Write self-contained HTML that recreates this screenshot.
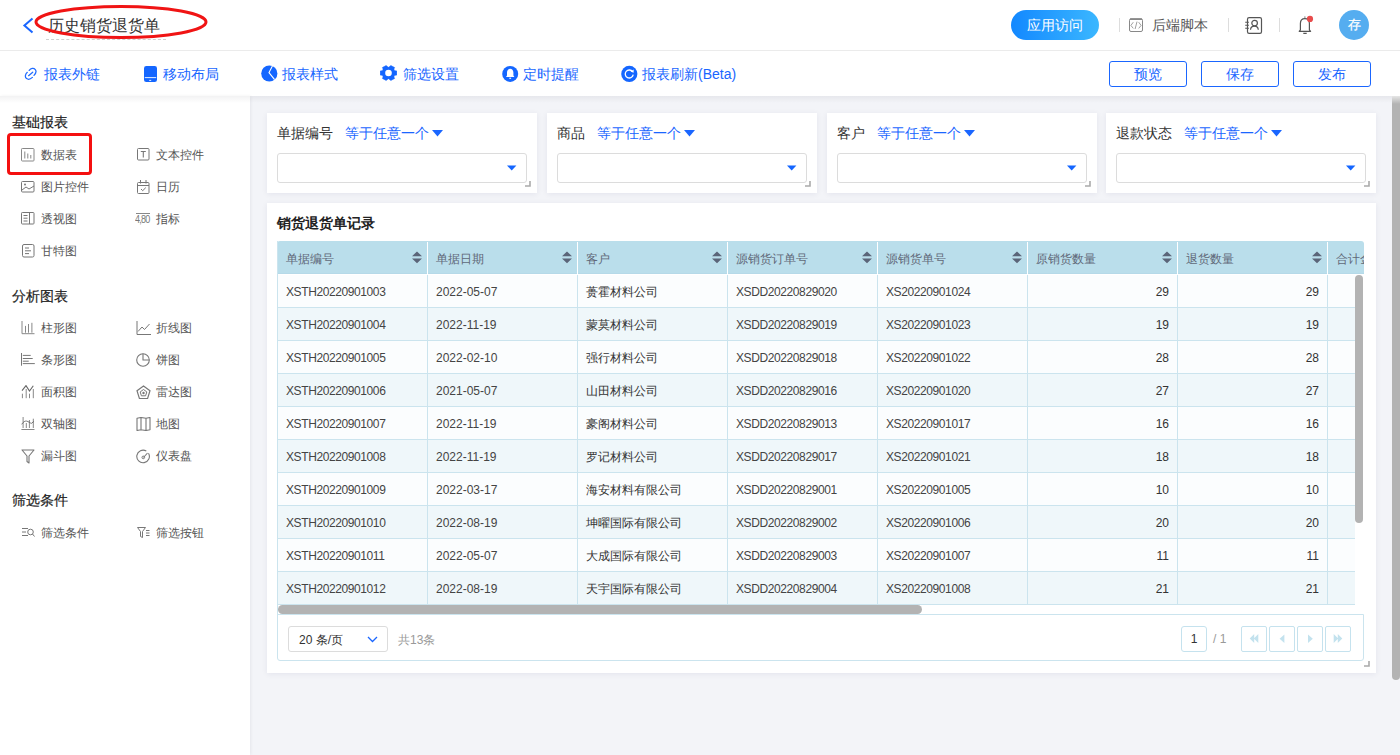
<!DOCTYPE html>
<html><head><meta charset="utf-8">
<style>
*{box-sizing:border-box;margin:0;padding:0}
html,body{width:1400px;height:755px;overflow:hidden;background:#f3f4f8;font-family:"Liberation Sans",sans-serif;color:#333}
.abs{position:absolute}
#top{position:absolute;left:0;top:0;width:1400px;height:51px;background:#fff;border-bottom:1px solid #ebebeb}
#tool{position:absolute;left:0;top:51px;width:1400px;height:45px;background:#fff}
#shadow{position:absolute;left:0;top:96px;width:1392px;z-index:5;height:7px;background:linear-gradient(rgba(0,0,20,0.05),rgba(0,0,20,0))}
#side{position:absolute;left:0;top:96px;width:250px;height:659px;background:#fff;box-shadow:1px 0 3px rgba(0,0,40,0.06)}
.t14{font-size:14px;line-height:14px;white-space:nowrap}
.t12{font-size:12px;line-height:12px;white-space:nowrap}
.blue{color:#1866ff}
.btn{position:absolute;top:61px;width:78px;height:26px;border:1px solid #1a66ff;border-radius:3px;color:#1a66ff;font-size:14px;line-height:24px;text-align:center;background:#fff}
.sd{font-size:12px;line-height:12px;color:#555;white-space:nowrap}
.th{font-size:12px;line-height:12px;color:#606878;white-space:nowrap}
.td{font-size:12px;line-height:12px;color:#444;white-space:nowrap;letter-spacing:-0.4px}
.tdc{letter-spacing:0;color:#333}
.tdd{letter-spacing:0px}
.card{position:absolute;background:#fff;box-shadow:0 1px 6px rgba(20,20,80,0.07)}
</style></head><body>
<div id="top"></div>
<div id="tool"></div>
<div id="side"></div>
<div id="shadow"></div>
<!--TOPSTART-->
<!-- TOP BAR -->
<svg class="abs" style="left:22px;top:17px" width="13" height="17" viewBox="0 0 13 17"><path d="M10.5 1.5 L2.4 8.5 L10.5 15.5" fill="none" stroke="#1a66ff" stroke-width="2"/></svg>
<div class="abs t14" style="left:48px;top:18px;font-size:16px;line-height:16px;color:#333">历史销货退货单</div>
<div class="abs" style="left:46px;top:39px;width:120px;border-top:1px dashed #d0d0d0"></div>
<svg class="abs" style="left:31px;top:2px" width="180" height="40" viewBox="0 0 180 40"><ellipse cx="90" cy="20" rx="85" ry="15.5" fill="none" stroke="#f01414" stroke-width="3"/></svg>

<div class="abs" style="left:1011px;top:10px;width:88px;height:30px;border-radius:15px;background:linear-gradient(90deg,#1388ff,#3bb7ff);color:#fff;font-size:14px;line-height:30px;text-align:center">应用访问</div>
<div class="abs" style="left:1119px;top:18px;width:1px;height:14px;background:#ddd"></div>
<svg class="abs" style="left:1129px;top:18px" width="14" height="14" viewBox="0 0 14 14"><rect x="0.5" y="0.8" width="13" height="12.7" rx="1.5" fill="none" stroke="#888" stroke-width="1"/><path d="M1 1.2h12" stroke="#888" stroke-width="1.6"/><path d="M4.3 4.2 L1.9 7.4 L4.3 10.4 M9.7 4.2 L12.1 7.4 L9.7 10.4 M8 3.6 L6.1 11" fill="none" stroke="#888" stroke-width="0.8"/></svg>
<div class="abs t14" style="left:1152px;top:18px;color:#555">后端脚本</div>
<div class="abs" style="left:1228px;top:18px;width:1px;height:14px;background:#ddd"></div>
<svg class="abs" style="left:1244px;top:16px" width="20" height="19" viewBox="0 0 20 19"><rect x="3.5" y="1.6" width="14" height="15.8" rx="1.6" fill="none" stroke="#555" stroke-width="1.2"/><path d="M1.2 6.3h3.7 M1.2 9.3h3.7 M1.2 12.3h3.7" stroke="#555" stroke-width="1.1"/><circle cx="10.6" cy="7.1" r="2.8" fill="none" stroke="#555" stroke-width="1.2"/><path d="M6.5 13.8 C6.9 9 13.9 9 14.3 13.8" fill="none" stroke="#555" stroke-width="1.2"/></svg>
<div class="abs" style="left:1279px;top:18px;width:1px;height:14px;background:#ddd"></div>
<svg class="abs" style="left:1296px;top:15px" width="20" height="20" viewBox="0 0 20 20"><path d="M3.2 16.3 L4.4 14.8 V8.6 C4.4 5.5 6.2 3.7 8.9 3.7 C11.6 3.7 13.4 5.5 13.4 8.6 V14.8 L14.6 16.3 Z" fill="none" stroke="#555" stroke-width="1.2" stroke-linejoin="round"/><path d="M8.4 2.2 H9.4 M7.3 18.4 H10.7" stroke="#555" stroke-width="1.2"/><circle cx="14" cy="3.9" r="3.1" fill="#e84c4c"/></svg>
<div class="abs" style="left:1339px;top:10px;width:30px;height:30px;border-radius:50%;background:#55adf0;color:#fff;font-size:12.5px;line-height:31px;text-align:center;-webkit-text-stroke:0.2px #fff">存</div>

<!-- TOOLBAR -->
<svg class="abs" style="left:24px;top:67px" width="14" height="14" viewBox="0 0 14 14"><path d="M5.2 3.4 C6.8 1.3 9.6 0.6 11.3 2.6 C12.6 4.3 11.7 6.7 10 8.4 M3.3 5.3 C1.2 7 0.6 10.2 2.6 11.6 C4.3 12.8 6.7 12 8.4 10.4 M4.6 8.7 L8.7 5.2" fill="none" stroke="#1f6bff" stroke-width="1.25" stroke-linecap="round"/></svg>
<div class="abs t14 blue" style="left:44px;top:67px">报表外链</div>
<svg class="abs" style="left:144px;top:66px" width="13" height="16" viewBox="0 0 13 16"><rect x="0" y="0" width="13" height="16" rx="2.3" fill="#1466ff"/><rect x="0.8" y="11.2" width="11.4" height="0.9" fill="#fff"/><rect x="5.2" y="13.9" width="2" height="0.9" fill="#fff"/></svg>
<div class="abs t14 blue" style="left:163px;top:67px">移动布局</div>
<svg class="abs" style="left:261px;top:65px" width="17" height="17" viewBox="0 0 17 17"><circle cx="8.3" cy="8.5" r="8.1" fill="#1466ff"/><path d="M11.8 0.3 L8 7.6 L13.6 14.6" fill="none" stroke="#fff" stroke-width="1.1"/></svg>
<div class="abs t14 blue" style="left:282px;top:67px">报表样式</div>
<svg class="abs" style="left:380px;top:65px" width="17" height="16" viewBox="0 0 17 16"><path d="M13.96 5.17 L15.27 5.78 L16.81 6.00 L16.81 10.00 L15.27 10.22 L13.96 10.83 L13.96 10.83 L14.02 12.17 L14.58 13.47 L10.73 15.48 L9.75 14.38 L8.50 13.67 L8.50 13.67 L7.25 14.38 L6.27 15.48 L2.42 13.47 L2.98 12.17 L3.04 10.84 L3.04 10.83 L1.73 10.22 L0.19 10.00 L0.19 6.00 L1.73 5.78 L3.04 5.17 L3.04 5.17 L2.98 3.83 L2.42 2.53 L6.27 0.52 L7.25 1.62 L8.50 2.33 L8.50 2.33 L9.75 1.62 L10.73 0.52 L14.58 2.53 L14.02 3.83 L13.96 5.17Z" fill="#1466ff" stroke="#1466ff" stroke-width="0.6" stroke-linejoin="round"/><circle cx="8.5" cy="8" r="3.3" fill="#fff"/></svg>
<div class="abs t14 blue" style="left:403px;top:67px">筛选设置</div>
<svg class="abs" style="left:502px;top:65px" width="17" height="17" viewBox="0 0 17 17"><circle cx="8.2" cy="8.9" r="8" fill="#1466ff"/><path d="M4 11.9 L5 10.6 V7.6 C5 5.4 6.5 3.8 8.2 3.8 C9.9 3.8 11.4 5.4 11.4 7.6 V10.6 L12.4 11.9 Z" fill="#fff"/><rect x="7.3" y="12.7" width="1.8" height="1.1" fill="#fff"/></svg>
<div class="abs t14 blue" style="left:523px;top:67px">定时提醒</div>
<svg class="abs" style="left:621px;top:65px" width="17" height="17" viewBox="0 0 17 17"><circle cx="8.3" cy="8.9" r="8.1" fill="#1466ff"/><path d="M11.6 6.8 A4 4 0 1 0 12.2 9.6" fill="none" stroke="#fff" stroke-width="1.3"/><path d="M9.6 6.6 L12.6 4.6 L12.6 7.8 Z" fill="#fff"/></svg>
<div class="abs t14 blue" style="left:642px;top:67px">报表刷新(Beta)</div>

<div class="btn" style="left:1109px">预览</div>
<div class="btn" style="left:1201px">保存</div>
<div class="btn" style="left:1293px">发布</div>

<!--TOPEND-->
<!--SIDESTART-->
<!-- SIDEBAR -->
<div class="abs t14" style="left:12px;top:115px;font-weight:500;color:#222;-webkit-text-stroke:0.2px #222">基础报表</div>
<div class="abs" style="left:7px;top:133px;width:85px;height:42px;border:3px solid #f41010;border-radius:4px"></div>
<svg class="abs" style="left:21px;top:148px" width="14" height="14" viewBox="0 0 14 14"><rect x="0.5" y="0.5" width="12.5" height="12.5" rx="0.8" fill="none" stroke="#888"/><path d="M3.8 3.5v7 M6.8 5.5v5 M9.8 7v3.5" stroke="#888" stroke-width="1"/></svg>
<div class="abs sd" style="left:41px;top:149px">数据表</div>
<svg class="abs" style="left:137px;top:148px" width="13" height="13" viewBox="0 0 13 13"><rect x="0.5" y="0.5" width="11.5" height="11.5" rx="1" fill="none" stroke="#777"/><path d="M3.8 3.5h5 M6.3 3.5v6" stroke="#777" stroke-width="1.1"/></svg>
<div class="abs sd" style="left:156px;top:149px">文本控件</div>

<svg class="abs" style="left:21px;top:181px" width="14" height="12" viewBox="0 0 14 12"><rect x="0.5" y="0.5" width="12.5" height="10.5" rx="1" fill="none" stroke="#777"/><path d="M1 9 L5 6 L8 8 L13 5" fill="none" stroke="#777"/><circle cx="4" cy="3.5" r="1" fill="#777"/></svg>
<div class="abs sd" style="left:41px;top:181px">图片控件</div>
<svg class="abs" style="left:137px;top:180px" width="13" height="14" viewBox="0 0 13 14"><rect x="0.5" y="2.5" width="11.5" height="11" rx="1" fill="none" stroke="#777"/><path d="M0.5 5.5h11.5 M3.5 0v3.5 M9 0v3.5 M4 9 L5.7 10.7 L8.8 7.6" fill="none" stroke="#777"/></svg>
<div class="abs sd" style="left:156px;top:181px">日历</div>

<svg class="abs" style="left:21px;top:212px" width="14" height="13" viewBox="0 0 14 13"><rect x="0.5" y="0.5" width="12.5" height="11.5" rx="0.8" fill="none" stroke="#777"/><path d="M2.5 3.5h4 M2.5 6.2h4 M2.5 9h4 M8.5 0.5v11.5" fill="none" stroke="#777"/></svg>
<div class="abs sd" style="left:41px;top:213px">透视图</div>
<div class="abs" style="left:136px;top:213px;width:14px;border-top:1px solid #888"></div>
<div class="abs" style="left:135px;top:215px;font-size:10px;line-height:10px;color:#777;letter-spacing:-0.8px;transform:scaleX(0.9);transform-origin:left">4,80</div>
<div class="abs sd" style="left:156px;top:213px">指标</div>

<svg class="abs" style="left:22px;top:244px" width="13" height="14" viewBox="0 0 13 14"><rect x="0.5" y="0.5" width="11.5" height="12.5" rx="1.5" fill="none" stroke="#777"/><path d="M3 4h4 M3 6.8h6 M3 9.6h4" fill="none" stroke="#777"/></svg>
<div class="abs sd" style="left:41px;top:245px">甘特图</div>

<div class="abs t14" style="left:12px;top:289px;font-weight:500;color:#222;-webkit-text-stroke:0.2px #222">分析图表</div>
<svg class="abs" style="left:20px;top:321px" width="15" height="14" viewBox="0 0 15 14"><path d="M2 0v12.7h12.5 M5.5 4.9v6.8 M8.5 3v8.7 M11.9 1.8v9.9" fill="none" stroke="#888" stroke-width="1"/></svg>
<div class="abs sd" style="left:41px;top:322px">柱形图</div>
<svg class="abs" style="left:136px;top:321px" width="15" height="14" viewBox="0 0 15 14"><path d="M1 0v13.5h14 M2 10.5 L6 6 L8.5 8.5 L13.5 3" fill="none" stroke="#777"/></svg>
<div class="abs sd" style="left:156px;top:322px">折线图</div>

<svg class="abs" style="left:20px;top:353px" width="15" height="14" viewBox="0 0 15 14"><path d="M1.5 0v12.7 M2.8 2.4h7.9 M2.8 5.5h9.9 M2.8 8.2h5.9 M2.8 10.6h12" fill="none" stroke="#777" stroke-width="1"/></svg>
<div class="abs sd" style="left:41px;top:354px">条形图</div>
<svg class="abs" style="left:136px;top:353px" width="14" height="14" viewBox="0 0 14 14"><circle cx="7" cy="7" r="6.3" fill="none" stroke="#777" stroke-width="1.1"/><path d="M7 0.7v6.3h6.3" fill="none" stroke="#777" stroke-width="1.1"/></svg>
<div class="abs sd" style="left:156px;top:354px">饼图</div>

<svg class="abs" style="left:20px;top:385px" width="15" height="15" viewBox="0 0 15 15"><path d="M2 5.7 L6 0.6 L9.5 6 L13.3 0.8" fill="none" stroke="#666" stroke-width="1.1"/><path d="M2.4 8.7v4.5 M6.2 4v9.2 M9.5 8.7v4.5 M13.3 4v9.2" fill="none" stroke="#888" stroke-width="1"/></svg>
<div class="abs sd" style="left:41px;top:386px">面积图</div>
<svg class="abs" style="left:136px;top:385px" width="15" height="15" viewBox="0 0 15 15"><path d="M7.5 1 L14 5.8 L11.6 13.5 H3.4 L1 5.8 Z" fill="none" stroke="#777" stroke-width="1.2"/><path d="M7.5 4.5 L10.8 6.9 L9.6 10.8 H5.4 L4.2 6.9 Z" fill="none" stroke="#777" stroke-width="1"/><circle cx="7.5" cy="8" r="1.2" fill="#777"/></svg>
<div class="abs sd" style="left:156px;top:386px">雷达图</div>

<svg class="abs" style="left:20px;top:417px" width="15" height="14" viewBox="0 0 15 14"><path d="M3.1 0v11 M13.3 1.7v9.3 M6.3 6v5 M9.4 3v8" fill="none" stroke="#888" stroke-width="1"/><path d="M1.4 12.5h13.1" stroke="#888" stroke-width="1"/><path d="M1.7 7.3 C3.5 4.6 5 3.9 6.5 4.1 C8.5 4.4 10 6.2 11.6 6.3 L13.9 4.3" fill="none" stroke="#666" stroke-width="0.9"/></svg>
<div class="abs sd" style="left:41px;top:418px">双轴图</div>
<svg class="abs" style="left:136px;top:417px" width="15" height="14" viewBox="0 0 15 14"><path d="M1 1.2 L5 0.5 L10 1.2 L14 0.5 V12.8 L10 13.5 L5 12.8 L1 13.5 Z M5 0.5v12.3 M10 1.2v12.3" fill="none" stroke="#777" stroke-width="1.1" stroke-linejoin="round"/></svg>
<div class="abs sd" style="left:156px;top:418px">地图</div>

<svg class="abs" style="left:21px;top:449px" width="14" height="15" viewBox="0 0 14 15"><path d="M1 1h12 L8 7 V14 L6 12.5 V7 Z" fill="none" stroke="#777" stroke-width="1.1" stroke-linejoin="round"/></svg>
<div class="abs sd" style="left:41px;top:450px">漏斗图</div>
<svg class="abs" style="left:136px;top:449px" width="15" height="15" viewBox="0 0 15 15"><path d="M12.5 4.2 A6.3 6.3 0 1 1 10.3 2" fill="none" stroke="#777" stroke-width="1.1"/><path d="M7.5 8.5 L11.5 4" fill="none" stroke="#777" stroke-width="1.1"/><circle cx="7.3" cy="8.4" r="1.3" fill="none" stroke="#777"/></svg>
<div class="abs sd" style="left:156px;top:450px">仪表盘</div>

<div class="abs t14" style="left:12px;top:493px;font-weight:500;color:#222;-webkit-text-stroke:0.2px #222">筛选条件</div>
<svg class="abs" style="left:22px;top:527px" width="13" height="11" viewBox="0 0 13 11"><path d="M0 1.5h6 M0 5h4 M0 8.5h6" fill="none" stroke="#777"/><circle cx="8.5" cy="5" r="2.8" fill="none" stroke="#777"/><path d="M10.5 7 L12.5 9.5" stroke="#777"/></svg>
<div class="abs sd" style="left:41px;top:527px">筛选条件</div>
<svg class="abs" style="left:137px;top:527px" width="13" height="11" viewBox="0 0 13 11"><path d="M0.5 0.5h8 L5.5 4.5 V10.5 L3.5 9.5 V4.5 Z" fill="none" stroke="#777" stroke-linejoin="round"/><path d="M9 3.5h3.5 M9 6h3.5 M9 8.5h3.5" stroke="#777"/></svg>
<div class="abs sd" style="left:156px;top:527px">筛选按钮</div>

<!--SIDEEND-->
<!--CARDSTART-->
<!-- FILTER CARDS -->
<div class="card" style="left:267px;top:113px;width:270px;height:80px"></div>
<div class="abs t14" style="left:277px;top:126px;color:#333">单据编号</div>
<div class="abs t14" style="left:345px;top:126px;color:#1a66ff">等于任意一个</div>
<svg class="abs" style="left:432px;top:130px" width="11" height="7" viewBox="0 0 11 7"><path d="M0 0h11L5.5 6.5Z" fill="#1a66ff"/></svg>
<div class="abs" style="left:277px;top:153px;width:250px;height:30px;border:1px solid #dcdcdc;border-radius:3px;background:#fff"></div>
<svg class="abs" style="left:507px;top:165px" width="10" height="6" viewBox="0 0 10 6"><path d="M0 0.5h9.4L4.7 5.5Z" fill="#1466ff"/></svg>
<svg class="abs" style="left:525px;top:181px" width="7" height="7" viewBox="0 0 7 7"><path d="M5 0v5H0" fill="none" stroke="#aaa" stroke-width="1.6"/></svg>
<div class="card" style="left:547px;top:113px;width:270px;height:80px"></div>
<div class="abs t14" style="left:557px;top:126px;color:#333">商品</div>
<div class="abs t14" style="left:597px;top:126px;color:#1a66ff">等于任意一个</div>
<svg class="abs" style="left:684px;top:130px" width="11" height="7" viewBox="0 0 11 7"><path d="M0 0h11L5.5 6.5Z" fill="#1a66ff"/></svg>
<div class="abs" style="left:557px;top:153px;width:250px;height:30px;border:1px solid #dcdcdc;border-radius:3px;background:#fff"></div>
<svg class="abs" style="left:787px;top:165px" width="10" height="6" viewBox="0 0 10 6"><path d="M0 0.5h9.4L4.7 5.5Z" fill="#1466ff"/></svg>
<svg class="abs" style="left:805px;top:181px" width="7" height="7" viewBox="0 0 7 7"><path d="M5 0v5H0" fill="none" stroke="#aaa" stroke-width="1.6"/></svg>
<div class="card" style="left:827px;top:113px;width:270px;height:80px"></div>
<div class="abs t14" style="left:837px;top:126px;color:#333">客户</div>
<div class="abs t14" style="left:877px;top:126px;color:#1a66ff">等于任意一个</div>
<svg class="abs" style="left:964px;top:130px" width="11" height="7" viewBox="0 0 11 7"><path d="M0 0h11L5.5 6.5Z" fill="#1a66ff"/></svg>
<div class="abs" style="left:837px;top:153px;width:250px;height:30px;border:1px solid #dcdcdc;border-radius:3px;background:#fff"></div>
<svg class="abs" style="left:1067px;top:165px" width="10" height="6" viewBox="0 0 10 6"><path d="M0 0.5h9.4L4.7 5.5Z" fill="#1466ff"/></svg>
<svg class="abs" style="left:1085px;top:181px" width="7" height="7" viewBox="0 0 7 7"><path d="M5 0v5H0" fill="none" stroke="#aaa" stroke-width="1.6"/></svg>
<div class="card" style="left:1106px;top:113px;width:270px;height:80px"></div>
<div class="abs t14" style="left:1116px;top:126px;color:#333">退款状态</div>
<div class="abs t14" style="left:1184px;top:126px;color:#1a66ff">等于任意一个</div>
<svg class="abs" style="left:1271px;top:130px" width="11" height="7" viewBox="0 0 11 7"><path d="M0 0h11L5.5 6.5Z" fill="#1a66ff"/></svg>
<div class="abs" style="left:1116px;top:153px;width:250px;height:30px;border:1px solid #dcdcdc;border-radius:3px;background:#fff"></div>
<svg class="abs" style="left:1346px;top:165px" width="10" height="6" viewBox="0 0 10 6"><path d="M0 0.5h9.4L4.7 5.5Z" fill="#1466ff"/></svg>
<svg class="abs" style="left:1364px;top:181px" width="7" height="7" viewBox="0 0 7 7"><path d="M5 0v5H0" fill="none" stroke="#aaa" stroke-width="1.6"/></svg>
<!--CARDEND-->
<!--TABLESTART-->
<!-- TABLE CARD -->
<div class="card" style="left:267px;top:203px;width:1109px;height:470px"></div>
<div class="abs t14" style="left:277px;top:216px;font-weight:bold;color:#222">销货退货单记录</div>
<div class="abs" style="left:277px;top:241px;width:1087px;height:374px;overflow:hidden;background:#fff;border-radius:3px 3px 0 0">
<div class="abs" style="left:0;top:0;width:1087px;height:33px;background:#badeeb;border-bottom:1px solid #b5d9e8"></div>
<div class="abs th" style="left:9px;top:12px">单据编号</div>
<svg class="abs" style="left:135px;top:10px" width="10" height="13" viewBox="0 0 10 13"><path d="M0 5.2h10L5 0.6Z M0 7.6h10L5 12.2Z" fill="#5b6579"/></svg>
<div class="abs" style="left:150px;top:1px;width:1px;height:32px;background:#fff"></div>
<div class="abs th" style="left:159px;top:12px">单据日期</div>
<svg class="abs" style="left:285px;top:10px" width="10" height="13" viewBox="0 0 10 13"><path d="M0 5.2h10L5 0.6Z M0 7.6h10L5 12.2Z" fill="#5b6579"/></svg>
<div class="abs" style="left:300px;top:1px;width:1px;height:32px;background:#fff"></div>
<div class="abs th" style="left:309px;top:12px">客户</div>
<svg class="abs" style="left:435px;top:10px" width="10" height="13" viewBox="0 0 10 13"><path d="M0 5.2h10L5 0.6Z M0 7.6h10L5 12.2Z" fill="#5b6579"/></svg>
<div class="abs" style="left:450px;top:1px;width:1px;height:32px;background:#fff"></div>
<div class="abs th" style="left:459px;top:12px">源销货订单号</div>
<svg class="abs" style="left:585px;top:10px" width="10" height="13" viewBox="0 0 10 13"><path d="M0 5.2h10L5 0.6Z M0 7.6h10L5 12.2Z" fill="#5b6579"/></svg>
<div class="abs" style="left:600px;top:1px;width:1px;height:32px;background:#fff"></div>
<div class="abs th" style="left:609px;top:12px">源销货单号</div>
<svg class="abs" style="left:735px;top:10px" width="10" height="13" viewBox="0 0 10 13"><path d="M0 5.2h10L5 0.6Z M0 7.6h10L5 12.2Z" fill="#5b6579"/></svg>
<div class="abs" style="left:750px;top:1px;width:1px;height:32px;background:#fff"></div>
<div class="abs th" style="left:759px;top:12px">原销货数量</div>
<svg class="abs" style="left:885px;top:10px" width="10" height="13" viewBox="0 0 10 13"><path d="M0 5.2h10L5 0.6Z M0 7.6h10L5 12.2Z" fill="#5b6579"/></svg>
<div class="abs" style="left:900px;top:1px;width:1px;height:32px;background:#fff"></div>
<div class="abs th" style="left:909px;top:12px">退货数量</div>
<svg class="abs" style="left:1035px;top:10px" width="10" height="13" viewBox="0 0 10 13"><path d="M0 5.2h10L5 0.6Z M0 7.6h10L5 12.2Z" fill="#5b6579"/></svg>
<div class="abs" style="left:1050px;top:1px;width:1px;height:32px;background:#fff"></div>
<div class="abs th" style="left:1059px;top:12px">合计金额</div>
<div class="abs" style="left:0;top:34px;width:1078px;height:33px;background:#fbfdfe;border-bottom:1px solid #cbe4ee"></div>
<div class="abs td" style="left:9px;top:45px">XSTH20220901003</div>
<div class="abs td tdd" style="left:159px;top:45px">2022-05-07</div>
<div class="abs td tdc" style="left:309px;top:45px">蒉霍材料公司</div>
<div class="abs td" style="left:459px;top:45px">XSDD20220829020</div>
<div class="abs td" style="left:609px;top:45px">XS20220901024</div>
<div class="abs td tdc" style="left:750px;top:45px;width:142px;text-align:right">29</div>
<div class="abs td tdc" style="left:900px;top:45px;width:142px;text-align:right">29</div>
<div class="abs" style="left:0;top:67px;width:1078px;height:33px;background:#eff7fa;border-bottom:1px solid #cbe4ee"></div>
<div class="abs td" style="left:9px;top:78px">XSTH20220901004</div>
<div class="abs td tdd" style="left:159px;top:78px">2022-11-19</div>
<div class="abs td tdc" style="left:309px;top:78px">蒙莫材料公司</div>
<div class="abs td" style="left:459px;top:78px">XSDD20220829019</div>
<div class="abs td" style="left:609px;top:78px">XS20220901023</div>
<div class="abs td tdc" style="left:750px;top:78px;width:142px;text-align:right">19</div>
<div class="abs td tdc" style="left:900px;top:78px;width:142px;text-align:right">19</div>
<div class="abs" style="left:0;top:100px;width:1078px;height:33px;background:#fbfdfe;border-bottom:1px solid #cbe4ee"></div>
<div class="abs td" style="left:9px;top:111px">XSTH20220901005</div>
<div class="abs td tdd" style="left:159px;top:111px">2022-02-10</div>
<div class="abs td tdc" style="left:309px;top:111px">强行材料公司</div>
<div class="abs td" style="left:459px;top:111px">XSDD20220829018</div>
<div class="abs td" style="left:609px;top:111px">XS20220901022</div>
<div class="abs td tdc" style="left:750px;top:111px;width:142px;text-align:right">28</div>
<div class="abs td tdc" style="left:900px;top:111px;width:142px;text-align:right">28</div>
<div class="abs" style="left:0;top:133px;width:1078px;height:33px;background:#eff7fa;border-bottom:1px solid #cbe4ee"></div>
<div class="abs td" style="left:9px;top:144px">XSTH20220901006</div>
<div class="abs td tdd" style="left:159px;top:144px">2021-05-07</div>
<div class="abs td tdc" style="left:309px;top:144px">山田材料公司</div>
<div class="abs td" style="left:459px;top:144px">XSDD20220829016</div>
<div class="abs td" style="left:609px;top:144px">XS20220901020</div>
<div class="abs td tdc" style="left:750px;top:144px;width:142px;text-align:right">27</div>
<div class="abs td tdc" style="left:900px;top:144px;width:142px;text-align:right">27</div>
<div class="abs" style="left:0;top:166px;width:1078px;height:33px;background:#fbfdfe;border-bottom:1px solid #cbe4ee"></div>
<div class="abs td" style="left:9px;top:177px">XSTH20220901007</div>
<div class="abs td tdd" style="left:159px;top:177px">2022-11-19</div>
<div class="abs td tdc" style="left:309px;top:177px">豪阁材料公司</div>
<div class="abs td" style="left:459px;top:177px">XSDD20220829013</div>
<div class="abs td" style="left:609px;top:177px">XS20220901017</div>
<div class="abs td tdc" style="left:750px;top:177px;width:142px;text-align:right">16</div>
<div class="abs td tdc" style="left:900px;top:177px;width:142px;text-align:right">16</div>
<div class="abs" style="left:0;top:199px;width:1078px;height:33px;background:#eff7fa;border-bottom:1px solid #cbe4ee"></div>
<div class="abs td" style="left:9px;top:210px">XSTH20220901008</div>
<div class="abs td tdd" style="left:159px;top:210px">2022-11-19</div>
<div class="abs td tdc" style="left:309px;top:210px">罗记材料公司</div>
<div class="abs td" style="left:459px;top:210px">XSDD20220829017</div>
<div class="abs td" style="left:609px;top:210px">XS20220901021</div>
<div class="abs td tdc" style="left:750px;top:210px;width:142px;text-align:right">18</div>
<div class="abs td tdc" style="left:900px;top:210px;width:142px;text-align:right">18</div>
<div class="abs" style="left:0;top:232px;width:1078px;height:33px;background:#fbfdfe;border-bottom:1px solid #cbe4ee"></div>
<div class="abs td" style="left:9px;top:243px">XSTH20220901009</div>
<div class="abs td tdd" style="left:159px;top:243px">2022-03-17</div>
<div class="abs td tdc" style="left:309px;top:243px">海安材料有限公司</div>
<div class="abs td" style="left:459px;top:243px">XSDD20220829001</div>
<div class="abs td" style="left:609px;top:243px">XS20220901005</div>
<div class="abs td tdc" style="left:750px;top:243px;width:142px;text-align:right">10</div>
<div class="abs td tdc" style="left:900px;top:243px;width:142px;text-align:right">10</div>
<div class="abs" style="left:0;top:265px;width:1078px;height:33px;background:#eff7fa;border-bottom:1px solid #cbe4ee"></div>
<div class="abs td" style="left:9px;top:276px">XSTH20220901010</div>
<div class="abs td tdd" style="left:159px;top:276px">2022-08-19</div>
<div class="abs td tdc" style="left:309px;top:276px">坤曜国际有限公司</div>
<div class="abs td" style="left:459px;top:276px">XSDD20220829002</div>
<div class="abs td" style="left:609px;top:276px">XS20220901006</div>
<div class="abs td tdc" style="left:750px;top:276px;width:142px;text-align:right">20</div>
<div class="abs td tdc" style="left:900px;top:276px;width:142px;text-align:right">20</div>
<div class="abs" style="left:0;top:298px;width:1078px;height:33px;background:#fbfdfe;border-bottom:1px solid #cbe4ee"></div>
<div class="abs td" style="left:9px;top:309px">XSTH20220901011</div>
<div class="abs td tdd" style="left:159px;top:309px">2022-05-07</div>
<div class="abs td tdc" style="left:309px;top:309px">大成国际有限公司</div>
<div class="abs td" style="left:459px;top:309px">XSDD20220829003</div>
<div class="abs td" style="left:609px;top:309px">XS20220901007</div>
<div class="abs td tdc" style="left:750px;top:309px;width:142px;text-align:right">11</div>
<div class="abs td tdc" style="left:900px;top:309px;width:142px;text-align:right">11</div>
<div class="abs" style="left:0;top:331px;width:1078px;height:33px;background:#eff7fa;border-bottom:1px solid #cbe4ee"></div>
<div class="abs td" style="left:9px;top:342px">XSTH20220901012</div>
<div class="abs td tdd" style="left:159px;top:342px">2022-08-19</div>
<div class="abs td tdc" style="left:309px;top:342px">天宇国际有限公司</div>
<div class="abs td" style="left:459px;top:342px">XSDD20220829004</div>
<div class="abs td" style="left:609px;top:342px">XS20220901008</div>
<div class="abs td tdc" style="left:750px;top:342px;width:142px;text-align:right">21</div>
<div class="abs td tdc" style="left:900px;top:342px;width:142px;text-align:right">21</div>
<div class="abs" style="left:150px;top:34px;width:1px;height:330px;background:#cbe4ee"></div>
<div class="abs" style="left:300px;top:34px;width:1px;height:330px;background:#cbe4ee"></div>
<div class="abs" style="left:450px;top:34px;width:1px;height:330px;background:#cbe4ee"></div>
<div class="abs" style="left:600px;top:34px;width:1px;height:330px;background:#cbe4ee"></div>
<div class="abs" style="left:750px;top:34px;width:1px;height:330px;background:#cbe4ee"></div>
<div class="abs" style="left:900px;top:34px;width:1px;height:330px;background:#cbe4ee"></div>
<div class="abs" style="left:1050px;top:34px;width:1px;height:330px;background:#cbe4ee"></div>
<div class="abs" style="left:1078px;top:34px;width:9px;height:330px;background:#fff"></div>
<div class="abs" style="left:1078px;top:34px;width:8px;height:248px;border-radius:4px;background:#b3b3b3"></div>
<div class="abs" style="left:0;top:364px;width:1087px;height:9px;background:#fff"></div>
<div class="abs" style="left:1px;top:364px;width:644px;height:9px;border-radius:4.5px;background:#b3b3b3"></div>
</div>
<div class="abs" style="left:277px;top:614px;width:1087px;height:47px;border:1px solid #cbe4ee;border-radius:0 0 3px 3px;background:#fff"></div>
<div class="abs" style="left:277px;top:241px;width:1px;height:374px;background:#cbe4ee"></div>
<div class="abs" style="left:288px;top:626px;width:100px;height:26px;border:1px solid #dcdcdc;border-radius:3px;background:#fff"></div>
<div class="abs t12" style="left:299px;top:634px;color:#333">20 条/页</div>
<svg class="abs" style="left:367px;top:636px" width="11" height="7" viewBox="0 0 11 7"><path d="M1 1 L5.5 5.5 L10 1" fill="none" stroke="#1a66ff" stroke-width="1.3"/></svg>
<div class="abs t12" style="left:398px;top:634px;color:#999">共13条</div>
<div class="abs" style="left:1181px;top:626px;width:26px;height:26px;border:1px solid #c5e2ee;border-radius:3px;background:#fff;font-size:12px;line-height:24px;text-align:center;color:#333">1</div>
<div class="abs t12" style="left:1213px;top:633px;color:#999">/ 1</div>
<div class="abs" style="left:1241px;top:626px;width:26px;height:26px;border:1px solid #c5e2ee;border-radius:2px;background:#fff"></div>
<svg class="abs" style="left:1242px;top:627px" width="24" height="24" viewBox="0 0 24 24"><path d="M12.2 7 L7.7 11.5 L12.2 16 Z M16.3 7 L11.8 11.5 L16.3 16 Z" fill="#c3e2ee"/></svg>
<div class="abs" style="left:1269px;top:626px;width:26px;height:26px;border:1px solid #c5e2ee;border-radius:2px;background:#fff"></div>
<svg class="abs" style="left:1270px;top:627px" width="24" height="24" viewBox="0 0 24 24"><path d="M14.4 7.5 L9.6 11.8 L14.4 16.1 Z" fill="#c3e2ee"/></svg>
<div class="abs" style="left:1297px;top:626px;width:26px;height:26px;border:1px solid #c5e2ee;border-radius:2px;background:#fff"></div>
<svg class="abs" style="left:1298px;top:627px" width="24" height="24" viewBox="0 0 24 24"><path d="M10 7.5 L14.8 11.8 L10 16.1 Z" fill="#c3e2ee"/></svg>
<div class="abs" style="left:1325px;top:626px;width:26px;height:26px;border:1px solid #c5e2ee;border-radius:2px;background:#fff"></div>
<svg class="abs" style="left:1326px;top:627px" width="24" height="24" viewBox="0 0 24 24"><path d="M7.7 7 L12.2 11.5 L7.7 16 Z M11.8 7 L16.3 11.5 L11.8 16 Z" fill="#c3e2ee"/></svg>
<svg class="abs" style="left:1364px;top:661px" width="7" height="7" viewBox="0 0 7 7"><path d="M5 0v5H0" fill="none" stroke="#aaa" stroke-width="1.6"/></svg>
<div class="abs" style="left:1392px;top:96px;width:8px;height:659px;background:#f3f4f8"></div>
<div class="abs" style="left:1392px;top:96px;width:8px;height:584px;border-radius:0 0 4px 4px;background:linear-gradient(#e6e6e6 0px,#b3b3b3 8px)"></div>
<!--TABLEEND-->
</body></html>
